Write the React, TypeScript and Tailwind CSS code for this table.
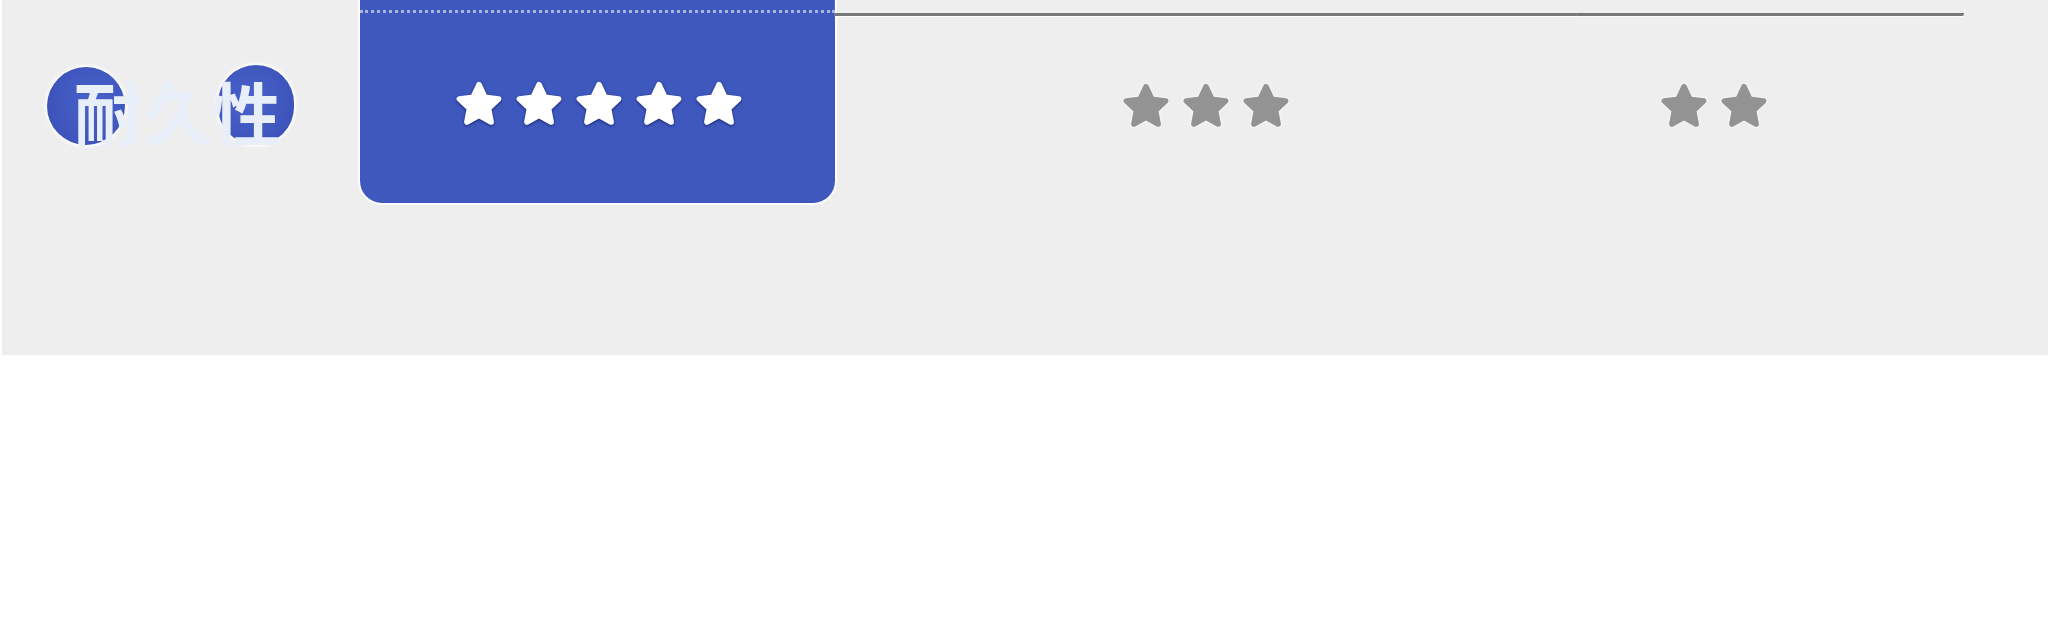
import React from "react";

type StarProps = {
  color: string;
  shadow: string;
};

// five point star, corners rounded by the stroke
const STAR_POINTS =
  "12,3.1 14.7,8.88 21.03,9.66 16.37,14.02 17.58,20.29 12,17.2 6.42,20.29 7.63,14.02 2.97,9.66 9.3,8.88";

function Star({ color, shadow }: StarProps) {
  return (
    <svg
      width={52}
      height={52}
      viewBox="0 0 24 24"
      className={shadow}
      aria-hidden="true">
      <polygon
        points={STAR_POINTS}
        fill={color}
        stroke={color}
        strokeWidth={2.6}
        strokeLinejoin="round"
      />
    </svg>
  );
}

function Stars({ count, white }: { count: number; white?: boolean }) {
  return (
    <div className="flex gap-[8px]">
      {Array.from({ length: count }).map((_, i) =>
        white ? (
          <Star
            key={i}
            color="#ffffff"
            shadow="drop-shadow-[0_1px_1.5px_rgba(20,35,110,0.9)]"
          />
        ) : (
          <Star
            key={i}
            color="#939393"
            shadow="drop-shadow-[0_0_1.5px_rgba(255,255,255,1)]"
          />
        )
      )}
    </div>
  );
}

export default function App() {
  return (
    <div className="w-[2048px] h-[637px] bg-white font-['Noto_Sans_CJK_SC','Noto_Sans',sans-serif]">
      <section className="ml-[2px] h-[355px] bg-[#eeeeee] flex">
        {/* row label */}
        <div className="relative w-[358px] shrink-0">
          <div className="flex gap-[93px] pl-[45px] pt-[67px]">
            <span className="w-[78px] h-[78px] rounded-full bg-[radial-gradient(circle_at_60%_45%,#4a63cc_0%,#3c54bb_70%,#3048b0_100%)] shadow-[0_0_3px_2px_rgba(255,255,255,0.9)]"></span>
            <span className="w-[76px] h-[80px] -mt-[2px] rounded-full bg-[radial-gradient(circle_at_40%_45%,#4a63cc_0%,#3c54bb_70%,#3048b0_100%)] shadow-[0_0_3px_2px_rgba(255,255,255,0.9)]"></span>
          </div>
          <span className="absolute left-[72px] top-[77px] text-[69px] leading-none font-bold text-[#e9eff9] blur-[0.6px] whitespace-nowrap">
            耐久性
          </span>
        </div>

        {/* highlighted column */}
        <div className="w-[475px] h-[203px] shrink-0 flex flex-col rounded-b-[22px] bg-[#3f58bd] shadow-[0_0_0_2px_rgba(255,255,255,0.85)]">
          <div className="h-[13px] border-b-[3px] border-dotted border-[#a9b5dc]"></div>
          <div className="flex justify-center pt-[65px] pl-[2px]">
            <Stars count={5} white />
          </div>
        </div>

        {/* other columns */}
        <div className="w-[742px] shrink-0 flex flex-col">
          <div className="h-[16px] border-b-[3px] border-[#777777] shadow-[0_1px_1px_rgba(255,255,255,0.9)]"></div>
          <div className="flex justify-center pt-[64px]">
            <Stars count={3} />
          </div>
        </div>
        <div className="w-[387px] shrink-0 flex flex-col">
          <div className="h-[16px] border-b-[3px] border-[#777777] rounded-br-[2px] shadow-[0_1px_1px_rgba(255,255,255,0.9)]"></div>
          <div className="flex justify-center pt-[64px] pr-[114px]">
            <Stars count={2} />
          </div>
        </div>
      </section>
    </div>
  );
}
